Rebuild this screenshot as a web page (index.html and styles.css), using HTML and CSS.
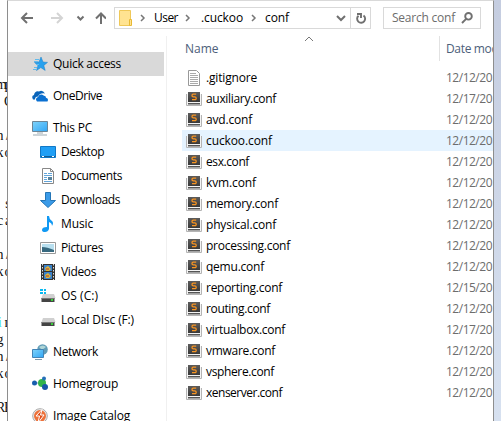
FILE: index.html
```
<!DOCTYPE html>
<html lang="en">
<head>
<meta charset="utf-8">
<title>conf</title>
<link rel="stylesheet" href="styles.css">
</head>
<body>
<svg class="defs" width="0" height="0">
  <defs>
    <linearGradient id="screen" x1="0" y1="0" x2="1" y2="1"><stop offset="0" stop-color="#7fd3fa"/><stop offset="1" stop-color="#2fa5f5"/></linearGradient>
    <linearGradient id="dark" x1="0" y1="0" x2="0" y2="1"><stop offset="0" stop-color="#5c5c5c"/><stop offset="1" stop-color="#393939"/></linearGradient>
    <symbol id="subl" viewBox="0 0 16 16"><path d="M.5 3v11.500h15V3" fill="#f4f4f4" stroke="#b4b4b4"/><path d="M2 1h12v10H2z" fill="url(#dark)"/><path d="M2 12h12v1.500H2z" fill="#555"/><path d="M10.200 3.200H7.300Q6 3.300 6 4.600T7.500 5.800h1.300Q10.200 5.900 10.200 7.300T8.900 8.700H6" fill="none" stroke="#f79422" stroke-width="1.300"/></symbol>
    <symbol id="drive" viewBox="0 0 16 16"><path d="M3 6h11l1.500 4H1.500z" fill="#d0d0d0"/><path d="M1.500 10h13v4h-13z" fill="#444"/><path d="M1.500 10.500h13" stroke="#777"/><path d="M11 12h2" stroke="#3f3" stroke-width="1.500"/></symbol>
  </defs>
</svg>
<div class="desktop">
  <pre class="console" id="console"></pre>
  <main class="window">
    <header class="toolbar">
      <svg class="nav" width="98" height="24" viewBox="0 0 98 24" fill="none" stroke="#707070" stroke-width="2"><path d="M25 12H14.500M19 7l-5 5 5 5"/><path stroke="#d4d4d4" d="M43 12h10.500M49 7l5 5-5 5"/><path d="M69.500 10.500l3 3 3-3"/><path d="M93 18V7.500M88 12.500l5-5 5 5"/></svg>
      <div class="address">
        <svg class="folder" width="14" height="18" viewBox="0 0 14 18"><path d="M.5 1.500h11v15H.5z" fill="#ffe391" stroke="#efc858"/><path d="M10.500 10.500h2v6h-2z" fill="#ffe391" stroke="#e8b934"/></svg>
        <svg class="sep s1" width="6" height="8"><path d="M1 1l3 3-3 3"/></svg><span class="c1"><span data-w="24">User</span></span>
        <svg class="sep s2" width="6" height="8"><path d="M1 1l3 3-3 3"/></svg><span class="c2"><span data-w="42">.cuckoo</span></span>
        <svg class="sep s3" width="6" height="8"><path d="M1 1l3 3-3 3"/></svg><span class="c3"><span data-w="24">conf</span></span>
        <svg class="drop" width="10" height="7" fill="none" stroke="#707070" stroke-width="2"><path d="M1 1l4 4 4-4"/></svg>
        <div class="refresh"><svg width="12" height="13" viewBox="0 0 12 13" fill="none" stroke="#707070" stroke-width="1.900"><path d="M8.500 3.500a4 4 0 1 1-5 .2M2 2h4v4"/></svg></div>
      </div>
      <div class="search"><span><span data-w="63">Search conf</span></span><svg width="12" height="12" fill="none" stroke="#707070" stroke-width="1.900"><circle cx="7.500" cy="4.300" r="3.300"/><path d="M5.200 6.800L1 11"/></svg></div>
    </header>
    <div class="body">
      <nav class="tree" id="tree"></nav>
      <section class="files">
        <div class="head"><span class="name">Name</span><span class="date"><span data-w="75">Date modified</span></span><svg class="sort" width="10" height="6" fill="none" stroke="#777"><path d="M1 5l4-4 4 4"/></svg></div>
        <div id="rows"></div>
      </section>
    </div>
  </main>
</div>
<script src="script.js"></script>
</body>
</html>
```
FILE: styles.css
```
* { box-sizing: border-box; }
body { margin: 0; overflow: hidden; font: 12px/16px "Open Sans", "Noto Sans", sans-serif; color: #000; }
.defs { position: absolute; }
svg { display: block; flex: none; }
.desktop { display: flex; width: 501px; height: 421px; background: linear-gradient(#c5cde0, #d7e1f0); overflow: hidden; }
.console { position: relative; width: 7px; height: 421px; margin: 0; background: #fff; overflow: hidden; font: 14px/17px "Liberation Serif", serif; color: #111; flex: none; }
.line { position: absolute; left: -4px; display: flex; }
.line b { width: 8px; font-weight: normal; text-align: center; }
.cyan { color: #4de3f0; }
.window { width: 487px; height: 421px; background: #fff; border: 1px solid #8e8e8e; border-top-color: #d9d9d9; border-bottom: 0; overflow: hidden; flex: none; }
.toolbar { display: flex; height: 28px; padding-top: 6px; }
.nav { margin: -1px 8px 0 0; }
.address { display: flex; align-items: center; width: 257px; height: 22px; border: 1px solid #d9d9d9; flex: none; }
.folder { margin-left: 4px; }
.sep { fill: none; stroke: #777; stroke-width: 1.500; }
.s1 { margin-left: 7px; }
.address span { white-space: nowrap; flex: none; }
.c1 { width: 25px; margin-left: 8px; }
.s2 { margin-left: 6px; }
.c2 { width: 42px; margin-left: 10px; }
.s3 { margin-left: 8px; }
.c3 { width: 23px; margin-left: 8px; }
.drop { margin-left: auto; margin-right: 4px; }
.refresh { width: 20px; height: 20px; border-left: 1px solid #d9d9d9; padding: 4px 0 0 4px; }
.search { display: flex; align-items: center; width: 98px; height: 22px; margin-left: 12px; border: 1px solid #d9d9d9; padding-left: 8px; color: #6d6d6d; flex: none; }
.search > span { width: 69px; white-space: nowrap; }
.body { display: flex; padding-top: 7px; }
.tree { width: 159px; height: 386px; padding-top: 16px; border-right: 1px solid #f0f0f0; overflow: hidden; flex: none; }
.item { display: flex; align-items: center; width: 156px; height: 24px; padding-left: 24px; white-space: nowrap; }
.item svg { margin-right: 5px; }
.child { padding-left: 32px; }
.gap { margin-top: 8px; }
.active { background: #d9d9d9; }
.files { width: 326px; padding-left: 15px; flex: none; overflow: hidden; }
.head { position: relative; display: flex; height: 25px; padding-left: 3px; color: #4c607a; line-height: 25px; margin-bottom: 6px; }
.head .name { width: 254px; flex: none; }
.date { border-left: 1px solid #e2e2e2; padding-left: 6px; white-space: nowrap; flex: none; }
.sort { position: absolute; left: 122px; top: 0; }
.row { display: flex; align-items: center; height: 21px; padding-left: 4px; white-space: nowrap; }
.row svg { margin-right: 4px; }
.row .name { width: 240px; }
.row .time { color: #6d6d6d; }
.hover { background: #e5f3ff; }
.fit { display: inline-block; }
```
FILE: script.js
```
const icons = {
  star: '<path d="M9 1l2 5 4.500.4-3.700 3 1.400 5L8.800 11.600 4.500 14.500 6 9.500 2.500 6.500 7 6z" fill="#28a1ee" stroke="#167fc8" stroke-width=".5"/><path d="M3 3.500h4M2 5.500h4M4 8.500h3M2 11.500h3M1 13.500h3" stroke="#61bbed"/>',
  cloud: '<path d="M1 11.500Q-1 8 2 7 3 2.500 7 3.500q3.500-2 6 2-5-1-7 3-3 0-3 3z" fill="#0a64b9"/><path d="M5 13.500Q2.500 10.500 6 9 8 5 12 7.700q2 0 2 2Q17 10.500 15.500 13.500z" fill="#0a70d1"/>',
  pc: '<path d="M.5 1.500h15v10H.5z" fill="url(#screen)" stroke="#6c8596"/><path d="M5 13h6M1 15h14" stroke="#9baab2"/>',
  desktop: '<path d="M.5 2.500h15v11H.5z" fill="#209ff5" stroke="#1178c6"/><path d="M1 12.500h14" stroke="#135d94"/><path d="M2 12.500h2M12 12.500h2" stroke="#fff"/>',
  doc: '<path d="M2.500.5h8l3 3v12h-11z" fill="#fff" stroke="#888"/><path d="M10.500.5v3h3" fill="none" stroke="#888"/><path d="M4 5.500h3M8 5.500h4M4 7.500h8M4 9.500h3M4 11.500h3M4 13.500h8" stroke="#62a5da"/><path d="M8 9h4v3H8z" fill="#57829c"/>',
  down: '<path d="M5.500.5h5v8h5L8 15.500.5 8.500h5z" fill="#3b9be8" stroke="#2475b6"/>',
  music: '<path d="M7 0h2q0 3 3 5 2 2 0 5 0-3-3-4v7q-1 3-4 3-3 0-3-2 0-3 5-3z" fill="#1199f3"/>',
  picture: '<path d="M.5 2.500h15v11H.5z" fill="#fff" stroke="#999"/><path d="M2 4h12v8H2z" fill="#b8dfef"/><path d="M2 7q5 0 12 3v2H2z" fill="#37697f"/>',
  video: '<path d="M1 0h14v16H1z" fill="#333"/><path d="M2.500 0v16M13.500 0v16" stroke="#ddd" stroke-dasharray="1.500 1.500"/><path d="M4 1h8v6H4zM4 8h8v7H4z" fill="#3b83cb"/><path d="M5 4l3-2 3 3-2 2H6zM5 11l3-2 3 3-2 2H6z" fill="#e0b538"/><path d="M6 5h3M6 12h3" stroke="#a83d36"/>',
  os: '<use href="#drive"/><path d="M0 1h3v2H0zM4 1h2v2H4zM0 4h3v2H0zM4 4h2v2H4z" fill="#08b9f1"/>',
  drive: '<use href="#drive"/>',
  network: '<circle cx="10.500" cy="5.500" r="5.300" fill="#609cb7"/><path d="M7 3q4-3 7 0l-4 3z" fill="#b0d5d6"/><path d="M.5 5.500h11v8H.5z" fill="url(#screen)" stroke="#4284b6"/><path d="M3 15.500h7" stroke="#7d9aad"/>',
  home: '<path d="M3 7l7 0 2-5M10 7l3 6" stroke="#6d9fb5" fill="none"/><circle cx="10" cy="7" r="4" fill="#31b44b"/><circle cx="2.500" cy="7" r="2.500" fill="#185eae"/><circle cx="12" cy="2.500" r="2" fill="#2370b8"/><circle cx="13" cy="11" r="3" fill="#1755a8"/>',
  catalog: '<circle cx="8" cy="8" r="7.300" fill="#eee" stroke="#aaa"/><circle cx="8" cy="8" r="6" fill="#ed713a"/><path d="M10 1.500L4 8h3.500l-1.500 7 6-8H8.500z" fill="#e04d18" stroke="#fff"/>',
  text: '<path d="M2.500.5h8l3 3v12h-11z" fill="#fff" stroke="#999"/><path d="M4 3.500h6M4 5.500h8M4 7.500h8M4 9.500h8M4 11.500h8M4 13.500h8" stroke="#aaa"/>',
  subl: '<use href="#subl"/>'
};
const icon = name => `<svg width="16" height="16" viewBox="0 0 16 16">${icons[name]}</svg>`;
const tree = [
  ['star', 'Quick access', 'active', 68], ['cloud', 'OneDrive', 'gap', 49], ['pc', 'This PC', 'gap', 39],
  ['desktop', 'Desktop', 'child', 43], ['doc', 'Documents', 'child', 61], ['down', 'Downloads', 'child', 59],
  ['music', 'Music', 'child', 32], ['picture', 'Pictures', 'child', 42], ['video', 'Videos', 'child', 35],
  ['os', 'OS (C:)', 'child', 37], ['drive', 'Local DIsc (F:)', 'child', 73], ['network', 'Network', 'gap', 45],
  ['home', 'Homegroup', 'gap', 65], ['catalog', 'Image Catalog', 'gap', 77]
];
document.getElementById('tree').innerHTML = tree.map(([i, label, cls, w]) =>
  `<div class="item ${cls}">${icon(i)}<span data-w="${w}">${label}</span></div>`).join('');
const files = [
  ['.gitignore', 12, 51], ['auxiliary.conf', 17, 70], ['avd.conf', 12, 46], ['cuckoo.conf', 12, 66], ['esx.conf', 12, 43],
  ['kvm.conf', 12, 50], ['memory.conf', 12, 72], ['physical.conf', 12, 70], ['processing.conf', 12, 84], ['qemu.conf', 12, 58],
  ['reporting.conf', 15, 76], ['routing.conf', 12, 64], ['virtualbox.conf', 17, 79], ['vmware.conf', 12, 69],
  ['vsphere.conf', 12, 68], ['xenserver.conf', 12, 76]
];
document.getElementById('rows').innerHTML = files.map(([name, day, w], n) =>
  `<div class="row ${n === 3 ? 'hover' : ''}">${icon(n ? 'subl' : 'text')}<span class="name"><span data-w="${w}">${name}</span></span><span class="time"><span data-w="46">12/${day}/20</span></span></div>`).join('');
const lines = [[76, 'mp'], [93, ' C'], [127, 'n/'], [144, 'ko'], [195, ' s'], [212, 'ca'], [246, 'n/'], [263, 'ko'], [314, 'in'], [331, 'g '], [348, 'n/'], [365, 'ko'], [399, 'RE']];
document.getElementById('console').innerHTML = lines.map(([y, t]) =>
  `<span class="line" style="top:${y}px">${[...t].map(c => `<b${c === 'i' ? ' class="cyan"' : ''}>${c}</b>`).join('')}</span>`).join('');
document.querySelectorAll('[data-w]').forEach(el => {
  el.classList.add('fit');
  const extra = (el.dataset.w - el.getBoundingClientRect().width) / el.textContent.length;
  el.style.letterSpacing = extra + 'px';
});
```
